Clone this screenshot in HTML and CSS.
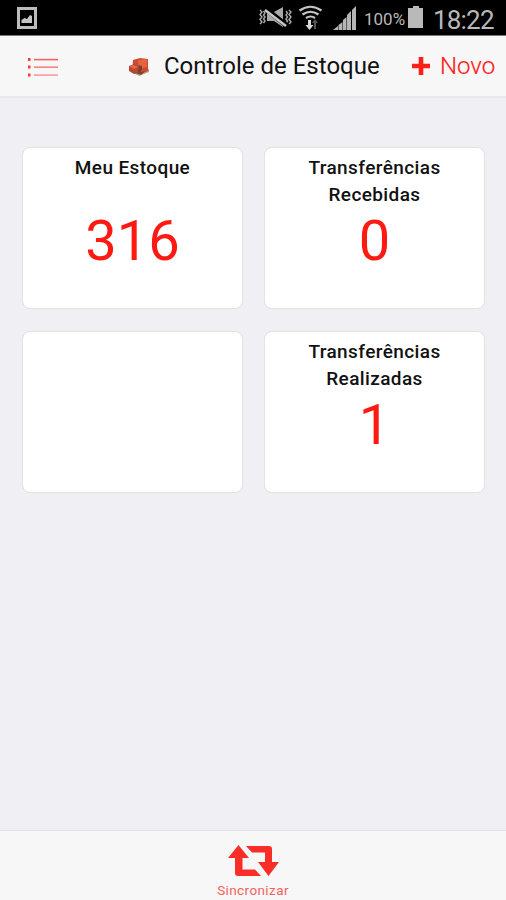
FILE: index.html
```html
<!DOCTYPE html>
<html lang="pt-BR">
<head>
<meta charset="utf-8">
<title>Controle de Estoque</title>
<link rel="stylesheet" href="styles.css">
</head>
<body>
<div class="status">
  <svg class="status-photo" width="20" height="22" viewBox="0 0 20 22"><path fill="#bcbcbc" fill-rule="evenodd" d="M0 0h20v22H0zM3 3v16h14V3z"/><path fill="#c4c4c4" d="M4.500 16v-3l3-2 2.500 1 3-4 2 1v7z"/></svg>
  <svg class="status-signals" width="100" height="28" viewBox="0 0 100 28">
    <g fill="none" stroke="#aaa" stroke-width="1.400"><path d="M2 8l2 2-2 2.500 2 2.500-2 2.500 2 2.500-2 2M5.500 9l1.500 2-1.500 2 1.500 2-1.500 2 1.500 2-1.500 2M31 8l2 2-2 2.500 2 2.500-2 2.500 2 2.500-2 2M28 9l1.500 2-1.500 2 1.500 2-1.500 2 1.500 2-1.500 2"/></g>
    <path fill="#aaa" d="M9 10h7l9-5v20l-9-6H9z"/><path stroke="#000" stroke-width="5" d="M8 7l20 16"/><path stroke="#c8c8c8" stroke-width="2.400" d="M7 8l21 16"/>
    <g fill="none" stroke="#c4c4c4" stroke-width="2.200"><path d="M41.500 8.500q11-7.500 22 0M44.500 12.500q8-5.500 16 0M48 16q4.500-3 9 0"/></g>
    <path fill="#d8d8d8" d="M50 18h3v5h2.500L51.500 28 47.500 23H50z"/><path fill="#555" d="M57 17l3 4h-2v6h-2v-6h-2z"/>
    <path fill="#b5b5b5" d="M75 28l5-4v4zM80.500 23l4-3v8h-4zM85 18l3.500-3v13H85zM89 13l4-4v19h-4zM94 8l4-4v24h-4z"/>
  </svg>
  <span class="percent">100%</span>
  <svg class="battery" width="16" height="22" viewBox="0 0 16 22"><path fill="#b9b9b9" d="M5 0h6v2h4v20H0V2h5z"/></svg>
  <span class="clock">18:22</span>
</div>
<header class="navbar">
  <svg class="menu" width="30" height="20" viewBox="0 0 30 20"><path fill="#ef3b35" d="M0 1h2.500v3H0zM0 8.500h2.500v3H0zM0 16.500h2.500v3H0z"/><path fill="#f4625d" d="M6 1.800h24v1.600H6z"/><path fill="#f58b87" d="M6 9.300h24v1.700H6z"/><path fill="#f7a5a2" d="M6 17.200h24V19H6z"/></svg>
  <svg class="bricks" width="22" height="20" viewBox="0 0 22 20"><path fill="#b8a58d" d="M2 14l9 5 10-4v-3H2z"/><path fill="#cc4a30" d="M5 3l7-2 8 1v12l-7 3-9-2z"/><path fill="#e66243" d="M10 3l9-1v8l-8 2z"/><path fill="#b84930" d="M1 9l6-2 5 3v6l-6 1-5-3z"/><path fill="#df684e" d="M1 9l5-1 4 2-4 2z"/><path fill="#7d3e2c" d="M11 8l3 1v3l-2 4-2-1zM6 15l5 1 6-2-4 4z"/></svg>
  <h1 class="title">Controle de Estoque</h1>
  <svg class="plus" width="18" height="18" viewBox="0 0 18 18"><path fill="#fc2018" d="M6.700 0h4.600v6.800H18v4.400h-6.700V18H6.700v-6.800H0V6.800h6.700z"/></svg>
  <span class="new">Novo</span>
</header>
<main class="cards">
  <section class="card"><h2 class="label">Meu Estoque</h2><div class="value">316</div></section>
  <section class="card"><h2 class="label">Transferências<br>Recebidas</h2><div class="value">0</div></section>
  <section class="card"></section>
  <section class="card"><h2 class="label">Transferências<br>Realizadas</h2><div class="value">1</div></section>
</main>
<footer class="toolbar">
  <svg class="sync" width="52" height="32" viewBox="0 0 52 32"><path fill="#fa2e28" d="M1 13L11.500 0 22 13h-6.500v11.500H28l6 6.500H11q-3 0-3-3V13zM19 1h23q3 0 3 3v13h7L41.500 31 31 17h7V7.500H25z"/></svg>
  <span class="sync-label">Sincronizar</span>
</footer>
</body>
</html>
```
FILE: styles.css
```css
* { box-sizing: border-box; }
body {
  margin: 0;
  height: 900px;
  display: flex;
  flex-direction: column;
  overflow: hidden;
  background: #efeff4;
  font-family: Roboto, sans-serif;
}
h1, h2 { margin: 0; }
svg { display: block; flex: none; }
.status {
  display: flex;
  flex: none;
  height: 36px;
  background: #000;
  border-bottom: 1px solid #777;
  color: #b8b8b8;
  white-space: nowrap;
}
.status-photo { margin: 7px 0 0 17px; }
.status-signals { margin: 2px 0 0 221px; }
.percent {
  width: 41px;
  margin-left: 6px;
  font-size: 17px;
  line-height: 38px;
}
.battery { margin: 6px 0 0 3px; }
.clock {
  margin-left: 9px;
  font-size: 26px;
  line-height: 40px;
  letter-spacing: -0.8px;
}
.navbar {
  display: flex;
  flex: none;
  height: 62px;
  background: #f7f7f8;
  border-bottom: 2px solid #e9e9ec;
  white-space: nowrap;
}
.menu { margin: 21px 0 0 28px; }
.bricks { margin: 21px 0 0 70px; }
.title {
  width: 218px;
  margin-left: 14px;
  font-size: 24px;
  font-weight: 400;
  line-height: 60px;
  color: #111;
}
.plus { margin: 21px 0 0 30px; }
.new {
  margin-left: 10px;
  font-size: 24px;
  font-weight: 300;
  line-height: 60px;
  color: #fc2018;
  -webkit-text-stroke: 0.2px #fc2018;
}
.cards {
  flex: 1;
  display: grid;
  grid-template-columns: 221px 221px;
  grid-auto-rows: 162px;
  align-content: start;
  gap: 22px 21px;
  padding: 49px 0 0 22px;
}
.card {
  display: flex;
  flex-direction: column;
  justify-content: space-between;
  padding: 6px 0 34px;
  text-align: center;
  background: #fff;
  border: 1px solid #e2e2e5;
  border-radius: 8px;
}
.card:nth-child(n+3) { padding-bottom: 35px; }
.label {
  font-size: 19px;
  font-weight: 500;
  line-height: 27px;
  letter-spacing: 0.4px;
  color: #111;
}
.value {
  font-size: 56px;
  line-height: 66px;
  color: #fc1a12;
}
.toolbar {
  display: flex;
  flex: none;
  flex-direction: column;
  align-items: center;
  height: 70px;
  padding-top: 14px;
  background: #f7f7f8;
  border-top: 1px solid #e4e4e7;
}
.sync-label {
  margin-top: 5px;
  font-size: 13.5px;
  line-height: 16px;
  letter-spacing: 0.4px;
  color: #f4625d;
}
```
